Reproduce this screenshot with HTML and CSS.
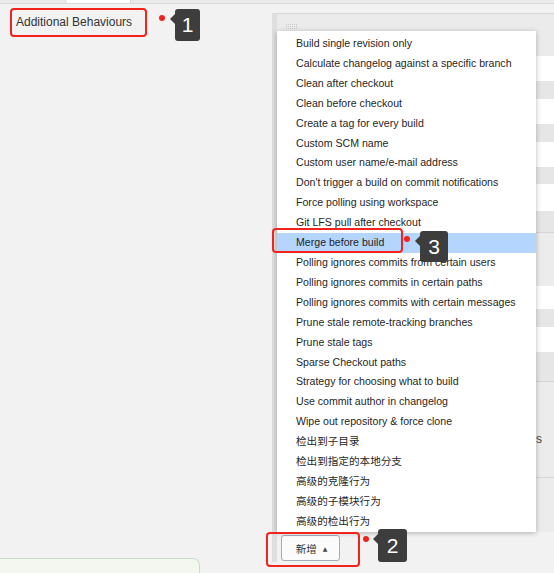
FILE: index.html
```html
<!DOCTYPE html>
<html lang="en">
<head>
<meta charset="utf-8">
<title>Additional Behaviours</title>
<link rel="stylesheet" href="styles.css">
</head>
<body>
<div class="topbar">
  <div class="topbar-left"></div>
  <div class="topbar-tab"></div>
  <div class="topbar-rest"></div>
</div>
<div class="main">
  <div class="left">
    <div class="section-label">Additional Behaviours</div>
    <div class="green-box"></div>
  </div>
  <div class="panel">
    <div class="panel-box">
      <div class="panel-head">
        <svg class="grip" width="11" height="5" viewBox="0 0 11 5">
          <g fill="#c9c9c9">
            <rect x="0" y="0" width="1" height="1"/><rect x="2" y="0" width="1" height="1"/><rect x="4" y="0" width="1" height="1"/><rect x="6" y="0" width="1" height="1"/><rect x="8" y="0" width="1" height="1"/><rect x="10" y="0" width="1" height="1"/>
            <rect x="0" y="2" width="1" height="1"/><rect x="2" y="2" width="1" height="1"/><rect x="4" y="2" width="1" height="1"/><rect x="6" y="2" width="1" height="1"/><rect x="8" y="2" width="1" height="1"/><rect x="10" y="2" width="1" height="1"/>
            <rect x="0" y="4" width="1" height="1"/><rect x="2" y="4" width="1" height="1"/><rect x="4" y="4" width="1" height="1"/><rect x="6" y="4" width="1" height="1"/><rect x="8" y="4" width="1" height="1"/><rect x="10" y="4" width="1" height="1"/>
          </g>
        </svg>
      </div>
      <div class="row white h25"></div>
      <div class="row grey h18"></div>
      <div class="row white h25"></div>
      <div class="row grey h18"></div>
      <div class="row white h25"></div>
      <div class="row grey h17"></div>
      <div class="row white h27"></div>
      <div class="row grey h21"></div>
      <div class="row soft h54 line-top"></div>
      <div class="row white h23"></div>
      <div class="row grey h18"></div>
      <div class="row white h25"></div>
      <div class="row grey h29"></div>
      <div class="row soft h96 line-top"><span class="row-label">Additional Behaviours</span></div>
      <div class="row soft h55 line-top"></div>
    </div>
    <div class="panel-foot">
      <button class="add-btn" type="button">新增 <span class="caret">▲</span></button>
    </div>
  </div>
</div>

<ul class="menu">
  <li>Build single revision only</li>
  <li>Calculate changelog against a specific branch</li>
  <li>Clean after checkout</li>
  <li>Clean before checkout</li>
  <li>Create a tag for every build</li>
  <li>Custom SCM name</li>
  <li>Custom user name/e-mail address</li>
  <li>Don't trigger a build on commit notifications</li>
  <li>Force polling using workspace</li>
  <li>Git LFS pull after checkout</li>
  <li class="active">Merge before build</li>
  <li>Polling ignores commits from certain users</li>
  <li>Polling ignores commits in certain paths</li>
  <li>Polling ignores commits with certain messages</li>
  <li>Prune stale remote-tracking branches</li>
  <li>Prune stale tags</li>
  <li>Sparse Checkout paths</li>
  <li>Strategy for choosing what to build</li>
  <li>Use commit author in changelog</li>
  <li>Wipe out repository &amp; force clone</li>
  <li>检出到子目录</li>
  <li>检出到指定的本地分支</li>
  <li>高级的克隆行为</li>
  <li>高级的子模块行为</li>
  <li>高级的检出行为</li>
</ul>

<div class="mark-box mark-box-3"></div>
<div class="mark-box mark-box-2"></div>

<span class="dot dot-1"></span>
<div class="badge badge-1">1</div>
<span class="dot dot-3"></span>
<div class="badge badge-3">3</div>
<span class="dot dot-2"></span>
<div class="badge badge-2">2</div>
</body>
</html>
```

FILE: styles.css
```css
html, body {
  margin: 0;
  padding: 0;
}
body {
  width: 554px;
  height: 573px;
  overflow: hidden;
  background: #f2f2f2;
  font-family: "Liberation Sans", Arial, "Noto Sans CJK SC", sans-serif;
  color: #222;
  position: relative;
}

/* top bar */
.topbar {
  display: flex;
  height: 3px;
  border-bottom: 1px solid #d9d9d9;
  background: #ebebeb;
}
.topbar-left { width: 67px; }
.topbar-tab {
  width: 63px;
  background: #ffffff;
  border-right: 1px solid #d9d9d9;
}
.topbar-rest { flex: 1; }

/* main area */
.main {
  display: flex;
  height: 569px;
}
.left {
  width: 272px;
  flex: none;
  display: flex;
  flex-direction: column;
}
.section-label {
  margin: 4px 0 0 10px;
  width: 129px;
  height: 25px;
  border: 2px solid #f2231d;
  border-radius: 4px;
  padding-left: 4px;
  box-sizing: content-box;
  font-size: 12px;
  line-height: 24px;
  color: #333;
  white-space: nowrap;
}
.green-box {
  margin-top: auto;
  width: 199px;
  height: 14px;
  background: #f3f7f0;
  border: 1px solid #c7dccb;
  border-left: none;
  border-bottom: none;
  border-radius: 0 7px 0 0;
}

/* background panel */
.panel {
  flex: 1;
  margin-top: 9px;
  height: 549px;
  border-left: 5px solid #dedede;
  display: flex;
  flex-direction: column;
}
.panel-box {
  display: flex;
  flex-direction: column;
}
.panel-head {
  height: 43px;
  border-top: 1px solid #d4d4d4;
  background: #ebebeb;
  padding: 10px 0 0 9px;
  box-sizing: border-box;
}
.grip { display: block; }
.row { flex: none; position: relative; overflow: hidden; }
.white { background: #ffffff; }
.grey { background: #e6e6e6; }
.soft { background: #ececec; }
.line-top { border-top: 1px solid #d6d6d6; }
.h17 { height: 17px; }
.h18 { height: 18px; }
.h21 { height: 21px; }
.h23 { height: 23px; }
.h25 { height: 25px; }
.h27 { height: 27px; }
.h29 { height: 29px; }
.h54 { height: 53px; }
.h55 { height: 54px; }
.h96 { height: 95px; }
.row-label {
  display: block;
  width: 265px;
  text-align: right;
  font-size: 12px;
  line-height: 14px;
  padding-top: 50px;
  color: #444;
  white-space: nowrap;
}
.panel-foot {
  flex: 1;
  background: #f2f2f2;
  padding: 3px 0 0 4px;
}
.add-btn {
  width: 59px;
  height: 26px;
  box-sizing: border-box;
  border: 1.5px solid #a2adb8;
  border-radius: 3px;
  background: #fbfbfb;
  font-family: "Noto Sans CJK SC", "Liberation Sans", sans-serif;
  font-size: 10.5px;
  color: #333;
  padding: 0 0 0 2px;
  display: flex;
  align-items: center;
  justify-content: center;
  gap: 6px;
}
.caret {
  font-size: 6px;
  color: #444;
  font-family: "DejaVu Sans", sans-serif;
}

/* dropdown menu */
.menu {
  position: absolute;
  left: 277px;
  top: 31px;
  width: 259px;
  margin: 0;
  padding: 3px 0 0;
  list-style: none;
  background: #ffffff;
  box-shadow: 0 1px 5px rgba(0, 0, 0, 0.28);
}
.menu li {
  height: 19.92px;
  line-height: 19.92px;
  padding-left: 19px;
  font-size: 10.6px;
  color: #1f1f1f;
  white-space: nowrap;
  font-family: "Liberation Sans", Arial, "Noto Sans CJK SC", sans-serif;
}
.menu li.active { background: #b4d5fe; }

/* annotations */
.mark-box {
  position: absolute;
  border: 2px solid #f2231d;
  border-radius: 4px;
  box-sizing: border-box;
}
.mark-box-3 { left: 272px; top: 228px; width: 131px; height: 25px; }
.mark-box-2 { left: 266px; top: 532px; width: 94px; height: 35px; }

.dot {
  position: absolute;
  width: 6px;
  height: 6px;
  border-radius: 50%;
  background: #f2231d;
}
.dot-1 { left: 159px; top: 15px; }
.dot-3 { left: 404px; top: 236px; }
.dot-2 { left: 363px; top: 536px; }

.badge {
  position: absolute;
  background: #3d3d3d;
  color: #ffffff;
  border-radius: 3px;
  font-family: "Liberation Sans", Arial, sans-serif;
  font-size: 21px;
  display: flex;
  align-items: center;
  justify-content: center;
}
.badge::before {
  content: "";
  position: absolute;
  left: -5px;
  top: 5px;
  border-top: 5px solid transparent;
  border-bottom: 5px solid transparent;
  border-right: 5px solid #3d3d3d;
}
.badge-1 { left: 175px; top: 9px; width: 25px; height: 32px; }
.badge-3 { left: 420px; top: 231px; width: 28px; height: 31px; }
.badge-2 { left: 378px; top: 529px; width: 29px; height: 33px; }
```
